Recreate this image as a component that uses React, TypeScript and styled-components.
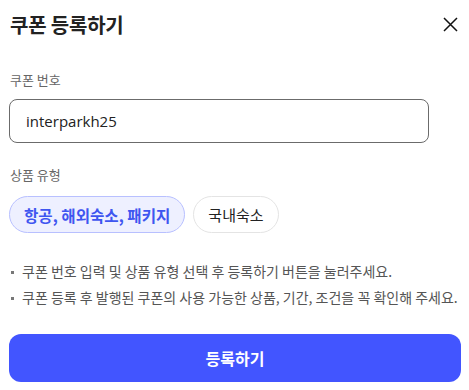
import { useState } from "react";
import styled, { createGlobalStyle } from "styled-components";

const GlobalStyle = createGlobalStyle`
  html, body {
    margin: 0;
    padding: 0;
    background: #fff;
  }
  body {
    font-family: "Noto Sans CJK KR", "Noto Sans", sans-serif;
    color: #222;
  }
`;

const Sheet = styled.div`
  width: 469px;
  height: 390px;
  box-sizing: border-box;
  padding: 10px 8px 0 9px;
  display: flex;
  flex-direction: column;
`;

const Header = styled.div`
  display: flex;
  align-items: center;
  justify-content: space-between;
  height: 28px;
`;

const Title = styled.h1`
  margin: 0 0 0 1px;
  font-size: 20px;
  font-weight: 700;
  letter-spacing: -0.2px;
  color: #222;
`;

const CloseButton = styled.button`
  border: 0;
  background: none;
  padding: 0;
  margin-right: 2px;
  width: 18px;
  height: 18px;
  display: flex;
  align-items: center;
  justify-content: center;
  cursor: pointer;
`;

const Label = styled.div`
  font-size: 13px;
  color: #666;
  margin-left: 1px;
`;

const Field = styled.div<{ $top: number; $gap: number }>`
  display: flex;
  flex-direction: column;
  gap: ${(p) => p.$gap}px;
  margin-top: ${(p) => p.$top}px;
`;

const Input = styled.input`
  box-sizing: border-box;
  width: 420px;
  height: 44px;
  border: 1px solid #6b6b6b;
  border-radius: 8px;
  padding: 0 16px;
  font-family: "Open Sans", "Noto Sans", sans-serif;
  font-size: 15px;
  color: #222;
  outline: none;
`;

const Chips = styled.div`
  display: flex;
  gap: 8px;
`;

const Chip = styled.button<{ $active?: boolean }>`
  height: 37px;
  box-sizing: border-box;
  padding: 0 14px;
  border-radius: 19px;
  font-family: "Noto Sans CJK KR", sans-serif;
  font-size: ${(p) => (p.$active ? 15.6 : 15)}px;
  font-weight: ${(p) => (p.$active ? 700 : 400)};
  color: ${(p) => (p.$active ? "#3f56f0" : "#222")};
  background: ${(p) => (p.$active ? "#eef0ff" : "#fff")};
  border: 1px solid ${(p) => (p.$active ? "#b8c0ff" : "#e4e4e4")};
  cursor: pointer;
`;

const Notes = styled.ul`
  list-style: none;
  margin: 29px 0 0;
  padding: 0;
  display: flex;
  flex-direction: column;
  gap: 7px;
`;

const Note = styled.li`
  position: relative;
  padding-left: 13px;
  font-size: 14px;
  line-height: 19px;
  white-space: nowrap;
  color: #555;
  &::before {
    content: "";
    position: absolute;
    left: 2px;
    top: 9px;
    width: 3px;
    height: 3px;
    background: #777;
  }
`;

const Submit = styled.button`
  margin-top: 27px;
  height: 48px;
  width: 452px;
  border: 0;
  border-radius: 12px;
  background: #4255ff;
  color: #fff;
  font-family: "Noto Sans CJK KR", sans-serif;
  font-size: 16px;
  font-weight: 700;
  cursor: pointer;
`;

const types = ["항공, 해외숙소, 패키지", "국내숙소"];

export default function App() {
  const [code, setCode] = useState("interparkh25");
  const [type, setType] = useState(0);

  return (
    <>
      <GlobalStyle />
      <Sheet>
        <Header>
          <Title>쿠폰 등록하기</Title>
          <CloseButton aria-label="닫기">
            <svg width="15" height="15" viewBox="0 0 15 15">
              <path d="M1 1L14 14M14 1L1 14" stroke="#111" strokeWidth="1.5" />
            </svg>
          </CloseButton>
        </Header>
        <Field $top={32} $gap={10}>
          <Label>쿠폰 번호</Label>
          <Input value={code} onChange={(e) => setCode(e.target.value)} />
        </Field>
        <Field $top={22} $gap={12}>
          <Label>상품 유형</Label>
          <Chips>
            {types.map((t, i) => (
              <Chip key={t} $active={type === i} onClick={() => setType(i)}>
                {t}
              </Chip>
            ))}
          </Chips>
        </Field>
        <Notes>
          <Note>쿠폰 번호 입력 및 상품 유형 선택 후 등록하기 버튼을 눌러주세요.</Note>
          <Note>쿠폰 등록 후 발행된 쿠폰의 사용 가능한 상품, 기간, 조건을 꼭 확인해 주세요.</Note>
        </Notes>
        <Submit>등록하기</Submit>
      </Sheet>
    </>
  );
}
